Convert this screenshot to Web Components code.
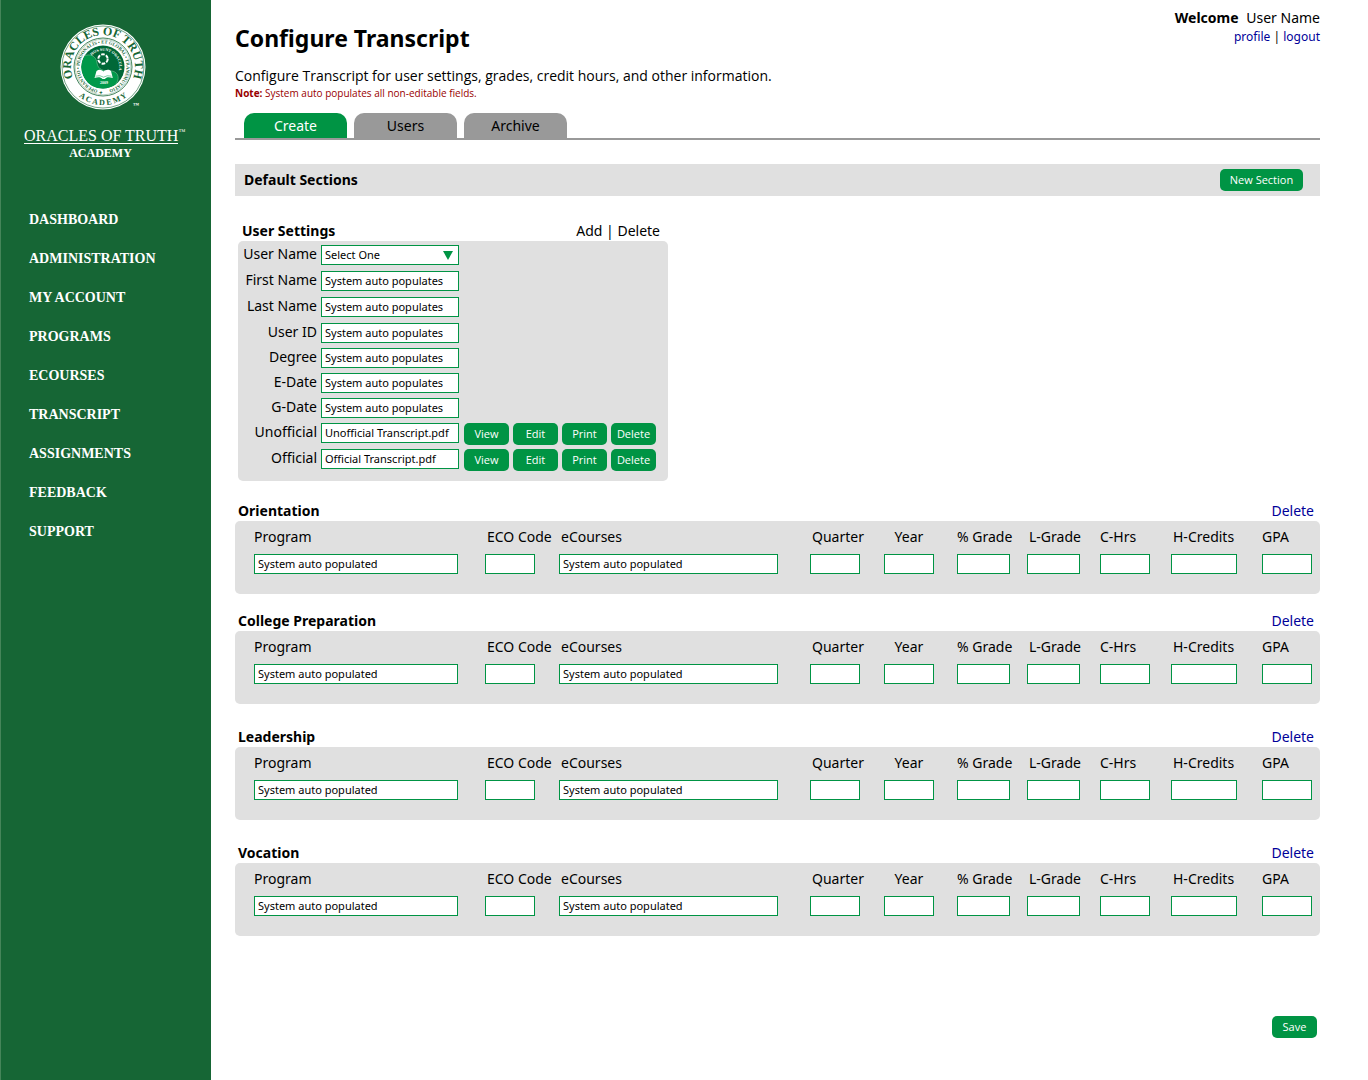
<!DOCTYPE html>
<html lang="en">
<head>
<meta charset="utf-8">
<title>Configure Transcript</title>
<style>
  :root {
    --brand: #009444;
    --brand-dark: #166635;
    --panel: #e0e0e0;
    --muted: #999999;
    --link: #000099;
    --ui: "Noto Sans", "Open Sans", sans-serif;
    --ui-alt: "Open Sans", "Noto Sans", sans-serif;
    --serif: "Liberation Serif", serif;
  }
  body { margin: 0; background: #fff; color: #000; font: 14px/20px var(--ui); }
</style>
</head>
<body>
<app-shell>
  <side-bar slot="side">
    <nav-link href="#dashboard">DASHBOARD</nav-link>
    <nav-link href="#administration">ADMINISTRATION</nav-link>
    <nav-link href="#account">MY ACCOUNT</nav-link>
    <nav-link href="#programs">PROGRAMS</nav-link>
    <nav-link href="#ecourses">ECOURSES</nav-link>
    <nav-link href="#transcript">TRANSCRIPT</nav-link>
    <nav-link href="#assignments">ASSIGNMENTS</nav-link>
    <nav-link href="#feedback">FEEDBACK</nav-link>
    <nav-link href="#support">SUPPORT</nav-link>
  </side-bar>
  <page-header user="User Name">
    <span slot="title">Configure Transcript</span>
    <span slot="intro">Configure Transcript for user settings, grades, credit hours, and other information.</span>
    <span slot="note">System auto populates all non-editable fields.</span>
  </page-header>
  <tab-bar tabs="Create,Users,Archive"></tab-bar>
  <section-bar>Default Sections<app-button slot="action" wide>New Section</app-button></section-bar>
  <user-settings>
    <field-row label="User Name" type="select" value="Select One"></field-row>
    <field-row label="First Name" value="System auto populates"></field-row>
    <field-row label="Last Name" value="System auto populates"></field-row>
    <field-row label="User ID" value="System auto populates" short></field-row>
    <field-row label="Degree" value="System auto populates" short></field-row>
    <field-row label="E-Date" value="System auto populates" short></field-row>
    <field-row label="G-Date" value="System auto populates" short></field-row>
    <field-row label="Unofficial" value="Unofficial Transcript.pdf">
      <app-button>View</app-button><app-button>Edit</app-button><app-button>Print</app-button><app-button>Delete</app-button>
    </field-row>
    <field-row label="Official" value="Official Transcript.pdf">
      <app-button>View</app-button><app-button>Edit</app-button><app-button>Print</app-button><app-button>Delete</app-button>
    </field-row>
  </user-settings>
  <section-stack>
    <section-stack dense>
      <course-section>Orientation</course-section>
      <course-section>College Preparation</course-section>
    </section-stack>
    <course-section>Leadership</course-section>
    <course-section>Vocation</course-section>
  </section-stack>
  <app-button slot="footer">Save</app-button>
</app-shell>

<script>
const define = (name, render, after) => customElements.define(name, class extends HTMLElement {
  connectedCallback() {
    if (this.shadowRoot) return;
    const root = this.attachShadow({ mode: "open" });
    root.innerHTML = "<style>*{box-sizing:border-box}</style>" + render(this);
    if (after) after(this, root);
  }
});

define("app-shell", () => `
  <style>
    :host { display: grid; grid-template-columns: 211px minmax(0, 1fr); min-height: 100vh; }
    aside { background: var(--brand-dark); border-left: 1px solid #458559; }
    main { padding: 8px 48px 40px 24px; }
    footer { display: flex; justify-content: flex-end; padding: 80px 3px 0 0; }
  </style>
  <aside><slot name="side"></slot></aside>
  <main><slot></slot><footer><slot name="footer"></slot></footer></main>`);

define("school-seal", () => `
  <style>
    :host { display: block; }
    svg { display: block; margin: 0 auto; }
    text { font-family: var(--serif); }
  </style>
  <svg width="90" height="90" viewBox="-45 -45 90 90" role="img" aria-label="Oracles of Truth Academy seal">
    <defs>
      <path id="outer-top" d="M-28 15.500A32 32 0 1 1 28 15.500"/>
      <path id="bottom" d="M-38 0A38 38 0 0 0 38 0"/>
      <path id="motto" d="M0 23.500A23.500 23.500 0 1 1 .1 23.500"/>
      <path id="inner" d="M-11 -11.500A16 16 0 0 1 16 3"/>
    </defs>
    <circle r="42.500" fill="#fff"/>
    <circle r="41" fill="none" stroke="#166635" stroke-width=".6"/>
    <circle r="29" fill="none" stroke="#166635" stroke-width=".8"/>
    <circle r="27.800" fill="none" stroke="#166635" stroke-width=".3"/>
    <circle r="21.500" fill="#006838"/>
    <path d="M0 21.500A21.500 21.500 0 0 1 -18.500 -11C-14 -13.500 -7 -12 -6 -4C-5 3 1 4 6 4C14 3 18 10 13 17A21.500 21.500 0 0 1 0 21.500Z" fill="#00984a"/>
    <path d="M-18.500 -11C-14 -13.500 -7 -12 -6 -4C-5 3 1 4 6 4C14 3 18 10 13 17" fill="none" stroke="#8cc9a3" stroke-width=".5"/>
    <circle cy="-8" r="4.700" fill="none" stroke="#fff" stroke-width="2" stroke-dasharray="3.700 1.220"/>
    <path d="M-8.500 11L-6.500 4C-4 1.800 -1.500 2.500 .5 4.500C2.500 2.500 6 1.800 8 4L9.800 11C6 9.500 3 10 2 12H-.5C-2 10 -5 9.500 -8.500 11Z" fill="#fff"/>
    <path d="M-7.500 9.200Q-2.500 7.800 .5 10.200Q4 7.800 8.500 9.200" fill="none" stroke="#00984a" stroke-width=".5"/>
    <text font-size="12" font-weight="bold" fill="#166635" text-anchor="middle"><textPath href="#outer-top" startOffset="50%">ORACLES OF TRUTH</textPath></text>
    <text font-size="8" font-weight="bold" fill="#166635" text-anchor="middle"><textPath href="#bottom" startOffset="50%">A C A D E M Y</textPath></text>
    <text font-size="4.700" font-weight="bold" fill="#166635"><textPath href="#motto">✦ OPERANTIO • PERSONALIS • ET GLOBAL • TRANSMUTATIO</textPath></text>
    <text font-size="4" font-weight="bold" fill="#fff" text-anchor="middle"><textPath href="#inner" startOffset="50%">HOS SUNT ORACULA</textPath></text>
    <text x="1" y="17" font-size="4" font-weight="bold" fill="#fff" text-anchor="middle">2009</text>
    <text x="33" y="40" font-size="6" font-weight="bold" fill="#fff" text-anchor="middle">™</text>
  </svg>`);

define("side-bar", () => `
  <style>
    :host { display: block; color: #fff; font-family: var(--serif); padding: 22px 24px 0 23px; }
    school-seal { margin-right: 6px; }
    .name { position: relative; width: max-content; height: 18px; margin-top: 14px; border-bottom: 1px solid #fff; font-size: 16px; line-height: 20px; }
    sup { position: absolute; left: 100%; top: 2px; font-size: 7px; line-height: 8px; }
    .sub { font-size: 12px; font-weight: bold; line-height: 18px; text-align: center; padding-right: 10px; }
    nav { display: flex; flex-direction: column; padding: 38px 0 0 5px; }
  </style>
  <school-seal></school-seal>
  <div class="name">ORACLES OF TRUTH<sup>™</sup></div>
  <div class="sub">ACADEMY</div>
  <nav aria-label="Main"><slot></slot></nav>`);

define("nav-link", el => `
  <style>
    :host { display: block; }
    a { display: block; color: #fff; text-decoration: none; font-size: 14px; font-weight: bold; line-height: 39px; white-space: nowrap; }
  </style>
  <a href="${el.getAttribute("href")}"><slot></slot></a>`);

define("page-header", el => `
  <style>
    :host { display: flex; justify-content: space-between; }
    h1 { margin: 0; padding-top: 13px; font-size: 23px; line-height: 34px; }
    .intro { margin: 0; padding-top: 11px; line-height: 20px; font-family: var(--ui-alt); }
    .note { margin: 0; font-size: 10px; line-height: 14px; color: #990000; font-family: var(--ui-alt); }
    .who { text-align: right; white-space: nowrap; }
    .who b { margin-right: 4px; }
    .links { font-size: 12px; line-height: 18px; }
    a { color: var(--link); text-decoration: none; }
  </style>
  <div>
    <h1><slot name="title"></slot></h1>
    <p class="intro"><slot name="intro"></slot></p>
    <p class="note"><b>Note:</b> <slot name="note"></slot></p>
  </div>
  <div class="who">
    <div><b>Welcome</b> ${el.getAttribute("user")}</div>
    <div class="links"><a href="#profile">profile</a> | <a href="#logout">logout</a></div>
  </div>`);

define("tab-bar", el => `
  <style>
    :host { display: flex; gap: 7px; padding: 13px 9px 0; border-bottom: 2px solid var(--muted); }
    button { width: 103px; height: 25px; border: 0; padding: 0; border-radius: 10px 10px 0 0; background: var(--muted); color: #000; font: inherit; line-height: 25px; }
    button[aria-selected="true"] { background: var(--brand); color: #fff; }
  </style>
  ${el.getAttribute("tabs").split(",").map((t, i) => `<button role="tab" aria-selected="${i === 0}">${t}</button>`).join("")}`,
  el => el.setAttribute("role", "tablist"));

define("app-button", () => `
  <style>
    :host { display: block; flex: none; width: 45px; }
    :host([wide]) { width: 83px; }
    button { display: block; width: 100%; height: 22px; padding: 0; border: 0; border-radius: 5px; background: var(--brand); color: #fff; font: 11px/22px var(--ui-alt); white-space: nowrap; }
  </style>
  <button type="button"><slot></slot></button>`);

define("section-bar", () => `
  <style>
    :host { display: flex; align-items: center; justify-content: space-between; height: 32px; margin-top: 24px; padding: 0 17px 0 9px; background: var(--panel); }
    h2 { margin: 0; font-size: 14px; line-height: 20px; }
  </style>
  <h2><slot></slot></h2><slot name="action"></slot>`);

define("user-settings", () => `
  <style>
    :host { display: block; width: 430px; margin: 25px 0 0 3px; }
    header { display: flex; justify-content: space-between; padding: 0 8px 0 4px; }
    h3 { margin: 0; font-size: 14px; line-height: 20px; }
    a { color: #000; text-decoration: none; }
    .panel { background: var(--panel); border-radius: 5px; padding: 1px 0 9px; }
  </style>
  <header><h3>User Settings</h3><span><a href="#add">Add</a> | <a href="#delete">Delete</a></span></header>
  <div class="panel"><slot></slot></div>`);

define("field-row", el => {
  const value = el.getAttribute("value");
  const control = el.getAttribute("type") === "select"
    ? `<span class="pick"><select id="f"><option>${value}</option></select><i></i></span>`
    : `<input id="f" value="${value}" readonly>`;
  return `
  <style>
    :host { display: grid; grid-template-columns: 79px 138px auto; column-gap: 4px; justify-content: start; height: 26px; }
    :host([short]) { height: 25px; }
    label { text-align: right; line-height: 24px; white-space: nowrap; }
    input, select { display: block; width: 100%; height: 20px; margin: 3px 0 0; padding: 0 3px 1px; border: 1px solid var(--brand); border-radius: 0; background: #fff; color: #000; font: 11px/17px var(--ui); appearance: none; }
    select { padding-bottom: 0; line-height: 18px; }
    .pick { position: relative; }
    i { position: absolute; right: 6px; top: 9px; width: 10px; height: 9px; background: var(--brand); clip-path: polygon(0 0, 100% 0, 50% 100%); pointer-events: none; }
    .actions { display: flex; gap: 4px; padding: 3px 0 0 1px; }
  </style>
  <label for="f">${el.getAttribute("label")}</label>${control}<div class="actions"><slot></slot></div>`;
});

define("section-stack", () => `
  <style>
    :host { display: flex; flex-direction: column; gap: 23px; margin-top: 20px; }
    :host([dense]) { gap: 17px; margin-top: 0; }
  </style>
  <slot></slot>`);

const columns = [
  ["Program", 27, "System auto populated"], ["ECO Code", 24], ["eCourses", 32, "System auto populated"],
  ["Quarter", 24], ["Year", 23], ["% Grade", 17], ["L-Grade", 20], ["C-Hrs", 21], ["H-Credits", 25], ["GPA", 0]
];
define("course-section", () => `
  <style>
    :host { display: block; }
    header { display: flex; justify-content: space-between; padding: 0 6px 0 3px; }
    h3 { margin: 0; font-size: 14px; line-height: 20px; }
    a { color: var(--link); text-decoration: none; }
    .panel { display: grid; grid-template-columns: 231fr 74fr 251fr 74fr 73fr 70fr 73fr 71fr 91fr 50fr; padding: 6px 8px 20px 19px; background: var(--panel); border-radius: 5px; }
    .cell { display: flex; flex-direction: column; gap: 7px; min-width: 0; }
    label { line-height: 20px; white-space: nowrap; }
    .inset label { padding-left: 2px; }
    .mid label { text-align: center; }
    input { width: 100%; height: 20px; margin: 0; padding: 0 3px 1px; border: 1px solid var(--brand); border-radius: 0; background: #fff; color: #000; font: 11px/17px var(--ui); }
  </style>
  <header><h3><slot></slot></h3><a href="#delete">Delete</a></header>
  <div class="panel">${columns.map(([name, gap, value], i) => `
    <div class="cell ${name === "Year" ? "mid" : /^(ECO|eC|Q|L|H)/.test(name) ? "inset" : ""}" style="padding-right:${gap}px"><label for="c${i}">${name}</label><input id="c${i}" value="${value || ""}"${value ? " readonly" : ""}></div>`).join("")}
  </div>`);
</script>
</body>
</html>
